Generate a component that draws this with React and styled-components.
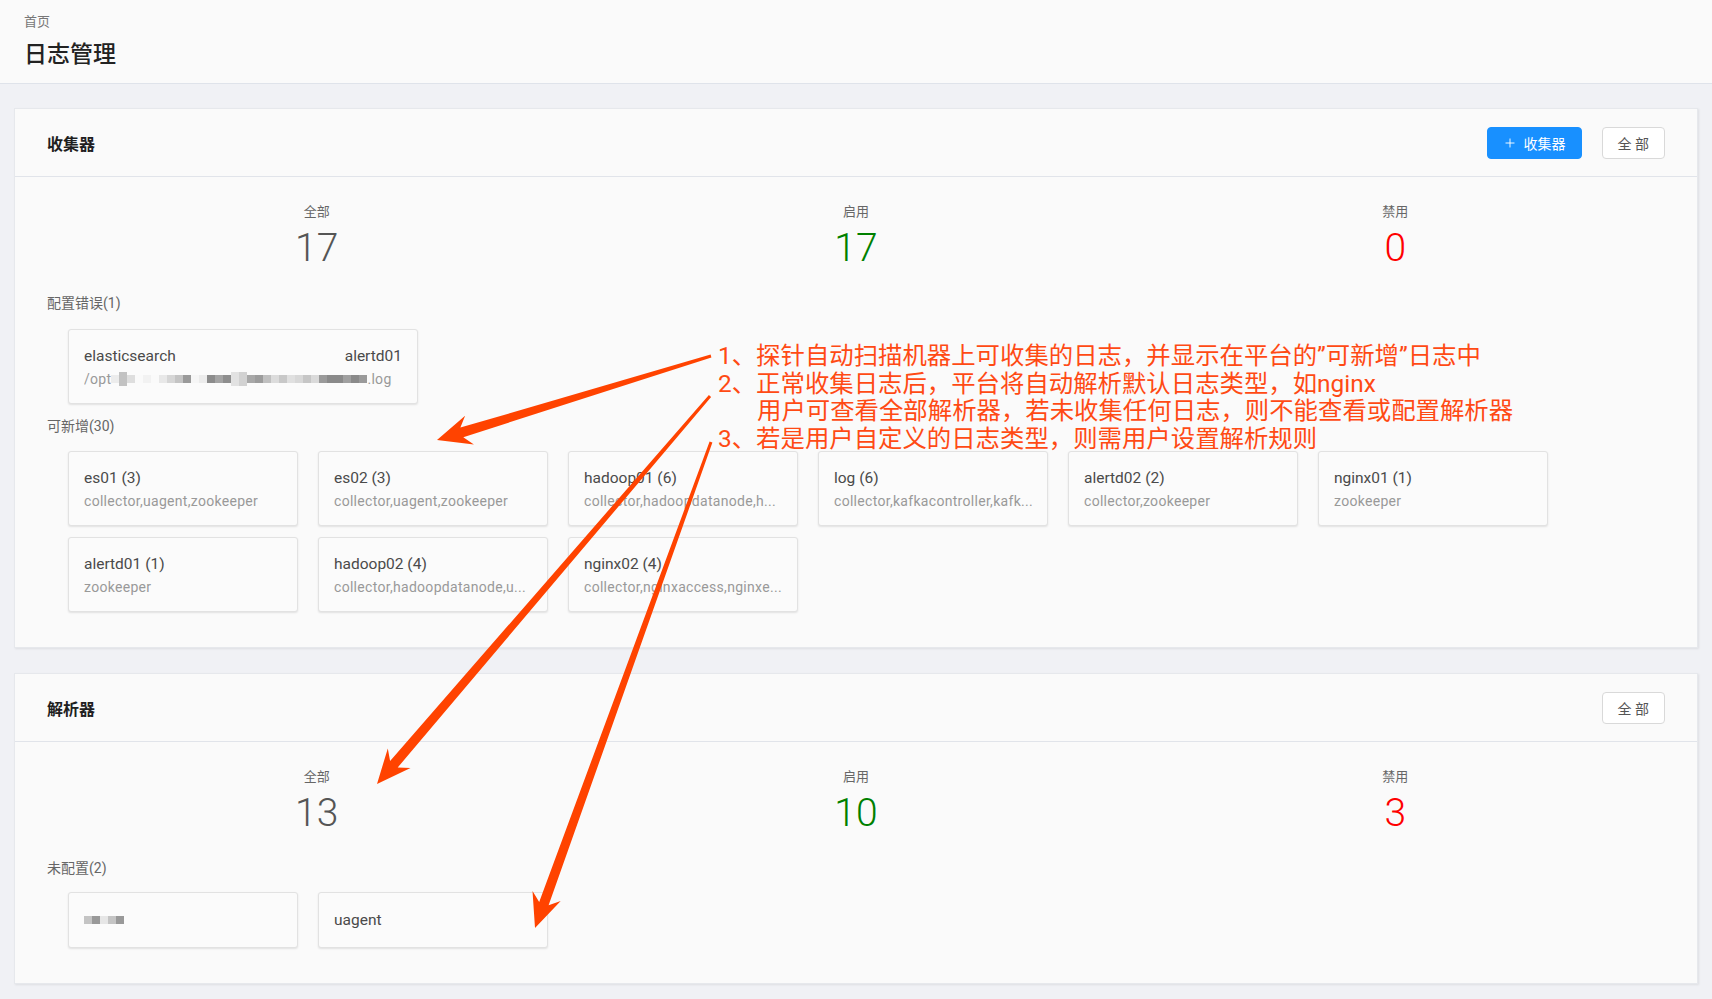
import React from "react"
import styled, { createGlobalStyle } from "styled-components"
import { Plus } from "lucide-react"

const GlobalStyle = createGlobalStyle`
  body {
    margin: 0;
    background: #f0f1f5;
    font-family: Roboto, "Noto Sans CJK SC", sans-serif;
    color: #333;
  }
`

const Page = styled.div`
  position: relative;
  min-height: 999px;
`

const PageHeader = styled.header`
  box-sizing: border-box;
  height: 84px;
  padding: 12px 24px 0;
  background: #fafafa;
  border-bottom: 1px solid #dfe3ea;
`

const Crumb = styled.div`
  font-size: 13px;
  line-height: 20px;
  color: #777;
`

const PageTitle = styled.h1`
  margin: 7px 0 0;
  font-size: 23px;
  line-height: 32px;
  font-weight: 500;
  color: #222;
`

const Main = styled.main`
  display: flex;
  flex-direction: column;
  gap: 25px;
  padding: 24px 14px 16px;
`

const Panel = styled.section`
  background: #fafafa;
  border: 1px solid #e6e8ec;
  box-shadow: 1px 1px 2px rgba(0, 0, 0, 0.08);
`

const PanelHead = styled.div`
  display: flex;
  align-items: center;
  justify-content: space-between;
  height: 67px;
  padding: 0 32px;
  border-bottom: 1px solid #e1e4ea;
`

const PanelTitle = styled.h2`
  margin: 0;
  font-size: 16px;
  font-weight: 700;
  color: #1f1f1f;
`

const Actions = styled.div`
  display: flex;
  gap: 20px;
`

const Button = styled.button`
  display: inline-flex;
  align-items: center;
  gap: 7px;
  height: 32px;
  padding: 0 15px;
  border-radius: 4px;
  font-family: inherit;
  font-size: 14px;
  cursor: pointer;
  border: 1px solid ${p => (p.$primary ? "#1890ff" : "#d9d9d9")};
  background: ${p => (p.$primary ? "#1890ff" : "#fff")};
  color: ${p => (p.$primary ? "#fff" : "#555")};
`

const PanelBody = styled.div`
  padding: 25px 32px 35px;
`

const Stats = styled.div`
  display: grid;
  grid-template-columns: repeat(3, 1fr);
`

const Stat = styled.div`
  text-align: center;
`

const StatLabel = styled.div`
  font-size: 13px;
  line-height: 20px;
  color: #666;
`

const StatValue = styled.div`
  margin-top: 3px;
  font-size: 39px;
  line-height: 46px;
  font-weight: 300;
  color: ${p => p.$color || "#555"};
`

const GroupLabel = styled.div`
  margin-top: ${p => p.$gap || 12}px;
  font-size: 14px;
  line-height: 20px;
  color: #666;
`

const Tiles = styled.div`
  display: flex;
  flex-wrap: wrap;
  gap: 11px 20px;
  margin-top: ${p => p.$gap || 15}px;
  padding-left: 21px;
  max-width: 1480px;
`

const Tile = styled.div`
  box-sizing: border-box;
  width: ${p => p.$width || 230}px;
  height: ${p => (p.$compact ? 56 : 75)}px;
  padding: ${p => (p.$compact ? "17px 15px" : "16px 15px 14px")};
  background: #fbfbfb;
  border: 1px solid #e2e2e2;
  border-radius: 3px;
  box-shadow: 0 1px 2px rgba(0, 0, 0, 0.1);
`

const TileTitle = styled.div`
  display: flex;
  justify-content: space-between;
  font-size: 15.5px;
  line-height: 20px;
  color: #4a4a4a;
  white-space: nowrap;
`

const TileSub = styled.div`
  display: flex;
  align-items: center;
  margin-top: 3px;
  font-size: 14px;
  letter-spacing: 0.3px;
  line-height: 20px;
  color: #999;
  white-space: nowrap;
  overflow: hidden;
`

const Pixels = styled.span`
  display: inline-flex;
  align-items: center;
  height: 20px;
`

const Pixel = styled.span`
  display: inline-block;
  width: 8px;
  height: ${p => p.$tall ? 14 : 8}px;
  align-self: ${p => p.$tall ? "flex-end" : "center"};
  margin-bottom: ${p => p.$tall ? 3 : 0}px;
  background: ${p => p.$shade};
`

const Overlay = styled.svg`
  position: absolute;
  left: 0;
  top: 0;
  width: 1712px;
  height: 999px;
  pointer-events: none;
`

const Note = styled.div`
  position: absolute;
  left: 718px;
  top: 342px;
  font-size: 24.4px;
  line-height: 27.6px;
  color: #ff4a14;
  white-space: nowrap;
  pointer-events: none;
`

const NoteLine = styled.div`
  padding-left: ${p => (p.$indent ? 39 : 0)}px;
`

const pathShades = [
  "#ececec", "#c2c2c2", "#dedede", "#fafafa", "#f2f2f2", "#fafafa", "#e8e8e8", "#d6d6d6",
  "#c4c4c4", "#9a9a9a", "#f6f6f6", "#ececec", "#8c8c8c", "#a4a4a4", "#8e8e8e", "#e2e2e2",
  "#d2d2d2", "#a8a8a8", "#9c9c9c", "#c0c0c0", "#dcdcdc", "#c8c8c8", "#e0e0e0", "#d8d8d8",
  "#c6c6c6", "#dadada", "#9a9a9a", "#8a8a8a", "#8a8a8a", "#a0a0a0", "#8a8a8a", "#9a9a9a",
]
const tallCells = [1, 15, 16]

const nameShades = ["#c4c4c4", "#999", "#e6e6e6", "#c4c4c4", "#999"]

const candidates = [
  { name: "es01 (3)", sub: "collector,uagent,zookeeper" },
  { name: "es02 (3)", sub: "collector,uagent,zookeeper" },
  { name: "hadoop01 (6)", sub: "collector,hadoopdatanode,h..." },
  { name: "log (6)", sub: "collector,kafkacontroller,kafk..." },
  { name: "alertd02 (2)", sub: "collector,zookeeper" },
  { name: "nginx01 (1)", sub: "zookeeper" },
  { name: "alertd01 (1)", sub: "zookeeper" },
  { name: "hadoop02 (4)", sub: "collector,hadoopdatanode,u..." },
  { name: "nginx02 (4)", sub: "collector,nginxaccess,nginxe..." },
]

const arrow = (x1, y1, x2, y2) => {
  const dx = x2 - x1
  const dy = y2 - y1
  const len = Math.hypot(dx, dy)
  const ux = dx / len
  const uy = dy / len
  const at = (d, w) => `${(x1 + ux * d - uy * w).toFixed(1)},${(y1 + uy * d + ux * w).toFixed(1)}`
  const head = 34
  return [
    at(0, 1.5), at(len - head + 8, 5), at(len - head, 15), `${x2},${y2}`,
    at(len - head, -15), at(len - head + 8, -5), at(0, -1.5),
  ].join(" ")
}

const StatsRow = ({ total, on, off }) => (
  <Stats>
    <Stat>
      <StatLabel>全部</StatLabel>
      <StatValue>{total}</StatValue>
    </Stat>
    <Stat>
      <StatLabel>启用</StatLabel>
      <StatValue $color="#008000">{on}</StatValue>
    </Stat>
    <Stat>
      <StatLabel>禁用</StatLabel>
      <StatValue $color="#ff0000">{off}</StatValue>
    </Stat>
  </Stats>
)

export default function App() {
  return (
    <Page>
      <GlobalStyle />
      <PageHeader>
        <Crumb>首页</Crumb>
        <PageTitle>日志管理</PageTitle>
      </PageHeader>
      <Main>
        <Panel>
          <PanelHead>
            <PanelTitle>收集器</PanelTitle>
            <Actions>
              <Button $primary>
                <Plus size={14} strokeWidth={1.6} />
                收集器
              </Button>
              <Button>全 部</Button>
            </Actions>
          </PanelHead>
          <PanelBody>
            <StatsRow total={17} on={17} off={0} />
            <GroupLabel $gap={22}>配置错误(1)</GroupLabel>
            <Tiles $gap={16}>
              <Tile $width={350}>
                <TileTitle>
                  <span>elasticsearch</span>
                  <span>alertd01</span>
                </TileTitle>
                <TileSub>
                  /opt
                  <Pixels>
                    {pathShades.map((s, i) => (
                      <Pixel key={i} $shade={s} $tall={tallCells.includes(i)} />
                    ))}
                  </Pixels>
                  .log
                </TileSub>
              </Tile>
            </Tiles>
            <GroupLabel>可新增(30)</GroupLabel>
            <Tiles>
              {candidates.map(c => (
                <Tile key={c.name}>
                  <TileTitle>{c.name}</TileTitle>
                  <TileSub>{c.sub}</TileSub>
                </Tile>
              ))}
            </Tiles>
          </PanelBody>
        </Panel>
        <Panel>
          <PanelHead>
            <PanelTitle>解析器</PanelTitle>
            <Actions>
              <Button>全 部</Button>
            </Actions>
          </PanelHead>
          <PanelBody>
            <StatsRow total={13} on={10} off={3} />
            <GroupLabel $gap={22}>未配置(2)</GroupLabel>
            <Tiles $gap={14}>
              <Tile $compact>
                <TileTitle>
                  <Pixels>
                    {nameShades.map((s, i) => (
                      <Pixel key={i} $shade={s} />
                    ))}
                  </Pixels>
                </TileTitle>
              </Tile>
              <Tile $compact>
                <TileTitle>uagent</TileTitle>
              </Tile>
            </Tiles>
          </PanelBody>
        </Panel>
      </Main>
      <Overlay viewBox="0 0 1712 999">
        <polygon points={arrow(711, 356, 437, 440)} fill="#ff4300" />
        <polygon points={arrow(710, 396, 377, 784)} fill="#ff4300" />
        <polygon points={arrow(711, 442, 535, 928)} fill="#ff4300" />
      </Overlay>
      <Note>
        <NoteLine>1、探针自动扫描机器上可收集的日志，并显示在平台的”可新增”日志中</NoteLine>
        <NoteLine>2、正常收集日志后，平台将自动解析默认日志类型，如nginx</NoteLine>
        <NoteLine $indent>用户可查看全部解析器，若未收集任何日志，则不能查看或配置解析器</NoteLine>
        <NoteLine>3、若是用户自定义的日志类型，则需用户设置解析规则</NoteLine>
      </Note>
    </Page>
  )
}
